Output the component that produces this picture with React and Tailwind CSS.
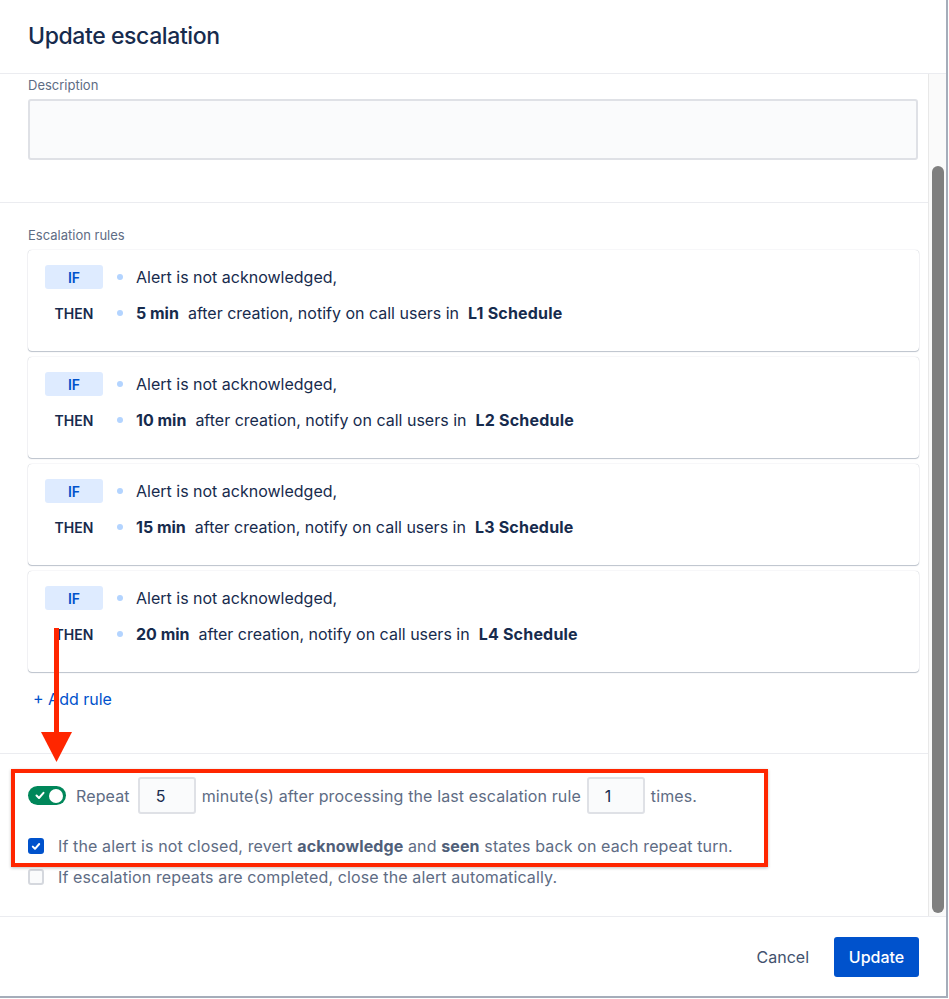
import React from "react";

const rules = [
  { min: "5 min", sched: "L1 Schedule" },
  { min: "10 min", sched: "L2 Schedule" },
  { min: "15 min", sched: "L3 Schedule" },
  { min: "20 min", sched: "L4 Schedule" },
];

function Dot() {
  return <span className="ml-[14px] mr-[13px] block h-[6px] w-[6px] shrink-0 rounded-full bg-[#b3d4ff]" />;
}

function RuleCard({ min, sched }) {
  return (
    <div className="rounded-[4px] bg-white pl-[17px] pt-[15px] pb-[26px] shadow-[0_1px_1px_rgba(9,30,66,0.25),0_0_1px_rgba(9,30,66,0.31)]">
      <div className="flex h-[24px] items-center">
        <span className="flex h-[24px] w-[58px] items-center justify-center rounded-[3px] bg-[#deebff] text-[14px] font-semibold text-[#0052cc]">
          IF
        </span>
        <Dot />
        <span className="text-[16px] text-[#172b4d]">Alert is not acknowledged,</span>
      </div>
      <div className="mt-[12px] flex h-[24px] items-center">
        <span className="flex w-[58px] items-center justify-center text-[14px] font-semibold text-[#172b4d]">THEN</span>
        <Dot />
        <span className="whitespace-pre text-[16px] text-[#172b4d]">
          <b className="font-bold">{min}</b>
          {"  after creation, notify on call users in  "}
          <b className="font-bold tracking-[0.2px]">{sched}</b>
        </span>
      </div>
    </div>
  );
}

function NumBox({ value }) {
  return (
    <span className="flex h-[37px] w-[58px] items-center rounded-[3px] border-2 border-[#dfe1e6] bg-[#fafbfc] pl-[16px] text-[16px] text-[#172b4d]">
      {value}
    </span>
  );
}

export default function App() {
  return (
    <div
      className="relative h-[999px] w-[949px] overflow-hidden bg-white"
      style={{ fontFamily: "Inter, 'Noto Sans', sans-serif" }}
    >
      <div className="flex h-[998px] w-[948px] flex-col border-r-2 border-b-2 border-[#a5adba]">
        {/* Header */}
        <div className="flex h-[74px] shrink-0 items-center border-b border-[#ebecf0] pl-[28px]">
          <h1 className="text-[23px] font-medium tracking-[-0.4px] text-[#172b4d]">Update escalation</h1>
        </div>

        {/* Body */}
        <div className="flex h-[842px] shrink-0">
          <div className="flex-1">
            <div className="pl-[28px] pr-[10px] pt-[3px]">
              <div className="text-[13px] leading-[17px] text-[#5e6c84]">Description</div>
              <div className="mt-[5px] h-[61px] rounded-[3px] border-2 border-[#dfe1e6] bg-[#fafbfc]" />
            </div>
            <div className="mt-[42px] border-t border-[#ebecf0]" />
            <div className="pl-[28px] pr-[9px] pt-[24px]">
              <div className="text-[13px] leading-[17px] text-[#5e6c84]">Escalation rules</div>
              <div className="mt-[6px] flex flex-col gap-[6px]">
                {rules.map((r) => (
                  <RuleCard key={r.sched} {...r} />
                ))}
              </div>
              <div className="mt-[16px] pl-[5px] text-[16px] leading-[22px] text-[#0052cc]">+ Add rule</div>
            </div>
            <div className="mt-[43px] border-t border-[#ebecf0]" />
            <div className="pl-[28px] pt-[23px] text-[16px] tracking-[0.12px] text-[#5e6c84]">
              <div className="flex h-[37px] items-center">
                <span className="relative flex h-[19px] w-[38px] items-center rounded-full bg-[#00875a]">
                  <svg className="absolute left-[7px] top-[5px]" width="10" height="9" viewBox="0 0 10 9">
                    <path d="M1.5 4.5 L4 7 L8.5 1.8" fill="none" stroke="white" strokeWidth="2" strokeLinecap="round" strokeLinejoin="round" />
                  </svg>
                  <span className="absolute right-[3px] top-[2.5px] h-[14px] w-[14px] rounded-full bg-white" />
                </span>
                <span className="ml-[10px] mr-[8px]">Repeat</span>
                <NumBox value="5" />
                <span className="mx-[6px]">minute(s) after processing the last escalation rule</span>
                <NumBox value="1" />
                <span className="ml-[6px]">times.</span>
              </div>
              <div className="mt-[22px] flex h-[20px] items-center">
                <span className="flex h-[16px] w-[16px] items-center justify-center rounded-[3px] bg-[#0052cc]">
                  <svg width="10" height="9" viewBox="0 0 10 9">
                    <path d="M1.8 4.6 L4 6.8 L8.2 2" fill="none" stroke="white" strokeWidth="2" strokeLinecap="round" strokeLinejoin="round" />
                  </svg>
                </span>
                <span className="ml-[14px]">
                  If the alert is not closed, revert <b className="font-bold text-[#505f79]">acknowledge</b> and{" "}
                  <b className="font-bold text-[#505f79]">seen</b> states back on each repeat turn.
                </span>
              </div>
              <div className="mt-[11px] flex h-[20px] items-center">
                <span className="h-[16px] w-[16px] rounded-[3px] border-2 border-[#d5d8de] bg-[#fafbfc]" />
                <span className="ml-[14px]">If escalation repeats are completed, close the alert automatically.</span>
              </div>
            </div>
          </div>
          {/* Scrollbar */}
          <div className="w-[18px] shrink-0 border-l border-[#e8e8e8] bg-[#fafafa] pl-[3px] pt-[92px]">
            <div className="h-[747px] w-[12px] rounded-full bg-[#7f7f7f]" />
          </div>
        </div>

        {/* Footer */}
        <div className="flex flex-1 items-center justify-end border-t border-[#ebecf0] pr-[27px] pt-[1px]">
          <span className="mr-[25px] text-[16px] text-[#42526e]">Cancel</span>
          <span className="flex h-[40px] w-[85px] items-center justify-center rounded-[3px] bg-[#0052cc] text-[16px] font-medium text-white">
            Update
          </span>
        </div>
      </div>

      {/* Annotations */}
      <div className="pointer-events-none absolute left-[11px] top-[769px] h-[98px] w-[757px] border-[4px] border-[#ff2600] shadow-[0_1px_3px_rgba(0,0,0,0.25)]" />
      <div className="pointer-events-none absolute left-[54px] top-[628px] h-[108px] w-[5px] bg-[#ff2600]" />
      <svg className="pointer-events-none absolute left-[41px] top-[732px]" width="31" height="31" viewBox="0 0 31 31">
        <polygon points="0,0 31,0 15.5,30" fill="#ff2600" />
      </svg>
    </div>
  );
}
